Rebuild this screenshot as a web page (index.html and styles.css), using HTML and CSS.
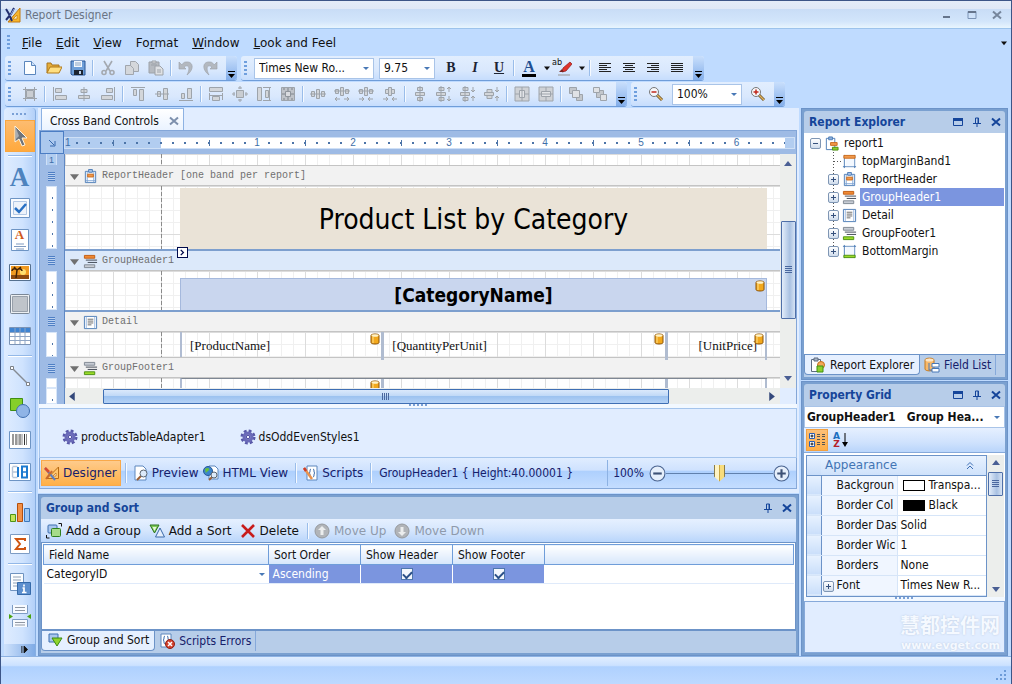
FILE: index.html
```html
<!DOCTYPE html>
<html lang="en">
<head>
    <meta charset="UTF-8">
    <meta name="viewport" content="width=device-width, initial-scale=1.0">
    <title>Report Designer</title>
    <link rel="stylesheet" href="styles.css">
</head>
<body>

<!-- icon sprite -->
<svg class="sprite" xmlns="http://www.w3.org/2000/svg">
    <symbol id="i-logo" viewBox="0 0 16 16"><path d="M15 1v14H3z" fill="#f7b52c" stroke="#c27a10"/><path d="M12 8v4H8z" fill="#fff3c8" stroke="#c27a10" stroke-width=".7"/><path d="M1 2l3 5 3 7M9 1L6 7l-5 6" fill="none" stroke="#222e6e" stroke-width="2"/><path d="M9 2L5 9" stroke="#8fa6de"/></symbol>
    <symbol id="i-new" viewBox="0 0 16 16"><path d="M2.500 1.500h7l4 4v9h-11z" fill="#fcfeff" stroke="#5a86bd"/><path d="M9.500 1.500v4h4" fill="#cfe2f8" stroke="#5a86bd"/></symbol>
    <symbol id="i-open" viewBox="0 0 16 16"><path d="M1 13V3h4l1 2h7v3" fill="#e5ad3a" stroke="#a8741c"/><path d="M1 13l3-6h12l-3 6z" fill="#ffdf80" stroke="#b27b1b"/></symbol>
    <symbol id="i-save" viewBox="0 0 16 16"><path d="M1 1h14v14H2l-1-1z" fill="#6f9fd8" stroke="#2b5797"/><path d="M4 1h8v6H4z" fill="#f4f8fd"/><path d="M5 3h6M5 5h6" stroke="#8aa4c4"/><path d="M4 10h9v5H4z" fill="#1c2430"/><path d="M9 11h2v3H9z" fill="#bcd0e8"/></symbol>
    <symbol id="i-cut" viewBox="0 0 16 16"><g fill="none" stroke="#a4a9b0" stroke-width="1.6"><path d="M4 1l6 10M12 1L6 11"/><circle cx="4" cy="12.500" r="2"/><circle cx="12" cy="12.500" r="2"/></g></symbol>
    <symbol id="i-copy" viewBox="0 0 16 16"><g fill="#d4d7db" stroke="#a1a6ad"><path d="M6.500 1.500h5l3 3v7h-8z"/><path d="M1.500 5.500h5l3 3v6h-8z"/></g></symbol>
    <symbol id="i-paste" viewBox="0 0 16 16"><g stroke="#9da2a9"><path d="M1 2h10v11H1z" fill="#b6bac0"/><path d="M4 1h4v2H4z" fill="#ddd"/><path d="M7 6h5l3 3v6H7z" fill="#dfe1e4"/><path d="M9 10h4M9 12h4M3 5h6"/></g></symbol>
    <symbol id="i-undo" viewBox="0 0 16 16"><path d="M1 2v7h7L6 7c4-3 7 0 3 8 8-6 6-14-1-13-2 0-3 1-4 3z" fill="#b3b8bf" stroke="#9a9fa6" stroke-width=".6"/></symbol>
    <symbol id="i-redo" viewBox="0 0 16 16"><path d="M15 2v7H8l2-2C6 4 3 7 7 15-1 9 1 1 8 2c2 0 3 1 4 3z" fill="#b3b8bf" stroke="#9a9fa6" stroke-width=".6"/></symbol>
    <symbol id="i-marker" viewBox="0 0 16 16"><path d="M6 12l1-4 7-6 2 2-6 7z" fill="#e0332c" stroke="#8c1d1a" stroke-width=".7"/><path d="M3 12l3-3 2 3z" fill="#7a2420"/><path d="M2 14h12v2H2z" fill="#b4bcc7"/></symbol>
    <symbol id="i-al" viewBox="0 0 16 16"><path d="M2 3.500h12M2 5.500h8M2 7.500h12M2 9.500h8M2 11.500h12" stroke="#222"/></symbol>
    <symbol id="i-ac" viewBox="0 0 16 16"><path d="M2 3.500h12M4 5.500h8M2 7.500h12M4 9.500h8M2 11.500h12" stroke="#222"/></symbol>
    <symbol id="i-ar" viewBox="0 0 16 16"><path d="M2 3.500h12M6 5.500h8M2 7.500h12M6 9.500h8M2 11.500h12" stroke="#222"/></symbol>
    <symbol id="i-aj" viewBox="0 0 16 16"><path d="M2 3.500h12M2 5.500h12M2 7.500h12M2 9.500h12M2 11.500h12" stroke="#222"/></symbol>

    <!-- layout toolbar, all disabled -->
    <symbol id="g-grid" viewBox="0 0 16 16"><g fill="#c9cdd2" stroke="#9ea4ab"><path d="M4.500 4.500h7v7h-7z"/><path d="M1 3.500h14M1 12.500h14M3.500 1v14M12.500 1v14" fill="none"/></g></symbol>
    <symbol id="g-left" viewBox="0 0 16 16"><g fill="#d3d6da" stroke="#9ea4ab"><path d="M1.500 1v14M3.500 2.500h6v4h-6zM3.500 9.500h11v4h-11z"/></g></symbol>
    <symbol id="g-center" viewBox="0 0 16 16"><g fill="#d3d6da" stroke="#9ea4ab"><path d="M8 1v14M5 3.500h6v3H5zM2.500 9.500h11v3h-11z"/></g></symbol>
    <symbol id="g-right" viewBox="0 0 16 16"><g fill="#d3d6da" stroke="#9ea4ab"><path d="M14.500 1v14M6.500 2.500h6v4h-6zM1.500 9.500h11v4h-11z"/></g></symbol>
    <symbol id="g-top" viewBox="0 0 16 16"><g fill="#d3d6da" stroke="#9ea4ab"><path d="M1 1.500h14M3.500 3.500h3v6h-3zM9.500 3.500h4v11h-4z"/></g></symbol>
    <symbol id="g-mid" viewBox="0 0 16 16"><g fill="#d3d6da" stroke="#9ea4ab"><path d="M1 8h14M3.500 5.500h3v5h-3zM9.500 2.500h4v11h-4z"/></g></symbol>
    <symbol id="g-bottom" viewBox="0 0 16 16"><g fill="#d3d6da" stroke="#9ea4ab"><path d="M1 14.500h14M3.500 7.500h3v5h-3zM9.500 2.500h4v10h-4z"/></g></symbol>
    <symbol id="g-samew" viewBox="0 0 16 16"><g fill="#d3d6da" stroke="#9ea4ab"><path d="M1.500 1.500h13v4h-13zM1.500 7v7M14.500 7v7M4.500 10.500h7v4h-7zM2 9.500h12"/></g></symbol>
    <symbol id="g-samegrid" viewBox="0 0 16 16"><g fill="#c9cdd2" stroke="#9ea4ab"><path d="M4.500 4.500h7v7h-7z"/><path d="M8 0v3M8 13v3M0 8h3M13 8h3M6 2h4M6 14h4M2 6v4M14 6v4"/></g></symbol>
    <symbol id="g-sameh" viewBox="0 0 16 16"><g fill="#d3d6da" stroke="#9ea4ab"><path d="M1.500 1.500h4v13h-4zM7 1.500h8M7 14.500h8M9.500 4.500h3v7h-3zM13.500 2v12"/></g></symbol>
    <symbol id="g-sameboth" viewBox="0 0 16 16"><path d="M1.500 1.500h13v13h-13z" fill="#bfc3c9" stroke="#9ea4ab"/><path d="M5.500 5.500h5v5h-5z" fill="#d9dbdf" stroke="#8f959c"/><path d="M8 2v3M8 11v3M2 8h3M11 8h3M3 3h2M11 3h2M3 13h2M11 13h2" stroke="#7f858c"/></symbol>
    <symbol id="g-hs1" viewBox="0 0 16 16"><g fill="#d3d6da" stroke="#9ea4ab"><path d="M0 8h16M1.500 5.500h3v5h-3zM6.500 3.500h3v9h-3zM11.500 5.500h3v5h-3z"/></g></symbol>
    <symbol id="g-hs2" viewBox="0 0 16 16"><g fill="#d3d6da" stroke="#9ea4ab"><path d="M0 5h16M1.500 3.500h3v4h-3zM6.500 1.500h3v8h-3zM11.500 3.500h3v4h-3zM1 13h5M3 11l-2 2 2 2M15 13h-5M13 11l2 2-2 2"/></g></symbol>
    <symbol id="g-hs3" viewBox="0 0 16 16"><g fill="#d3d6da" stroke="#9ea4ab"><path d="M0 5h16M1.500 3.500h3v4h-3zM6.500 1.500h3v8h-3zM11.500 3.500h3v4h-3zM1 13h5M4 11l2 2-2 2M15 13h-5M12 11l-2 2 2 2"/></g></symbol>
    <symbol id="g-hs4" viewBox="0 0 16 16"><g fill="#d3d6da" stroke="#9ea4ab"><path d="M3.500 3.500h3v4h-3zM6.500 1.500h3v8h-3zM9.500 3.500h3v4h-3zM1 13h5M4 11l2 2-2 2M15 13h-5M12 11l-2 2 2 2"/></g></symbol>
    <symbol id="g-vs1" viewBox="0 0 16 16"><g fill="#d3d6da" stroke="#9ea4ab"><path d="M8 0v16M5.500 1.500h5v3h-5zM3.500 6.500h9v3h-9zM5.500 11.500h5v3h-5z"/></g></symbol>
    <symbol id="g-vs2" viewBox="0 0 16 16"><g fill="#d3d6da" stroke="#9ea4ab"><path d="M5 0v16M3 1.500h5v3H3zM.500 6.500h9v3h-9zM3 11.500h5v3H3zM13 1v5M11 3l2-2 2 2M13 15v-5M11 13l2 2 2-2"/></g></symbol>
    <symbol id="g-vs3" viewBox="0 0 16 16"><g fill="#d3d6da" stroke="#9ea4ab"><path d="M5 0v16M3 1.500h5v3H3zM.500 6.500h9v3h-9zM3 11.500h5v3H3zM13 1v5M11 4l2 2 2-2M13 15v-5M11 12l2-2 2 2"/></g></symbol>
    <symbol id="g-vs4" viewBox="0 0 16 16"><g fill="#d3d6da" stroke="#9ea4ab"><path d="M3 3.500h5v3H3zM.500 6.500h9v3h-9zM3 9.500h5v3H3zM13 1v5M11 4l2 2 2-2M13 15v-5M11 12l2-2 2 2"/></g></symbol>
    <symbol id="g-ch" viewBox="0 0 16 16"><path d="M1 1h14v14H1z" fill="#cfd2d6" stroke="#9ea4ab"/><path d="M8 1v14M1 8h4M11 8h4M5.500 4.500h5v7h-5z" fill="#e3e5e8" stroke="#9ea4ab"/></symbol>
    <symbol id="g-cv" viewBox="0 0 16 16"><path d="M1 1h14v14H1z" fill="#cfd2d6" stroke="#9ea4ab"/><path d="M1 8h14M8 1v4M8 11v4M3.500 5.500h9v5h-9z" fill="#e3e5e8" stroke="#9ea4ab"/></symbol>
    <symbol id="g-front" viewBox="0 0 16 16"><g stroke="#9ea4ab"><path d="M1.500 1.500h7v6h-7zM8.500 8.500h6v6h-6z" fill="#c3c7cc"/><path d="M4.500 4.500h7v7h-7z" fill="#e0e2e5"/></g></symbol>
    <symbol id="g-back" viewBox="0 0 16 16"><g stroke="#9ea4ab"><path d="M4.500 4.500h7v7h-7z" fill="#c3c7cc"/><path d="M1.500 1.500h6v5h-6zM8.500 8.500h6v6h-6z" fill="#e0e2e5"/></g></symbol>
    <symbol id="i-zout" viewBox="0 0 16 16"><path d="M9 9l5 5" stroke="#6c5226" stroke-width="3"/><path d="M9 9l5 5" stroke="#e0b25c" stroke-width="1.400"/><circle cx="6" cy="6" r="4.500" fill="#f6f8fb" stroke="#777"/><path d="M3.500 6h5" stroke="#c0281c" stroke-width="1.500"/></symbol>
    <symbol id="i-zin" viewBox="0 0 16 16"><path d="M9 9l5 5" stroke="#6c5226" stroke-width="3"/><path d="M9 9l5 5" stroke="#e0b25c" stroke-width="1.400"/><circle cx="6" cy="6" r="4.500" fill="#f6f8fb" stroke="#777"/><path d="M3.500 6h5M6 3.500v5" stroke="#c0281c" stroke-width="1.500"/></symbol>

    <!-- toolbox -->
    <symbol id="t-arrow" viewBox="0 0 24 24"><path d="M7 2v16l4-3 3 7 3-1-3-7h5z" fill="#6f747b" stroke="#fff3dd"/><path d="M8 4v11l3-3" fill="#a9adb3"/></symbol>
    <symbol id="t-check" viewBox="0 0 24 24"><path d="M2.500 2.500h19v19h-19z" fill="#fafcff" stroke="#6d94c4"/><path d="M5.500 5.500h13v13h-13z" fill="#eef3fa" stroke="#b3c8e4"/><path d="M7 12l4 4 7-8" fill="none" stroke="#2870c4" stroke-width="2.500"/></symbol>
    <symbol id="t-rich" viewBox="0 0 24 24"><path d="M3.500 1.500h17v21h-17z" fill="#fff" stroke="#6d94c4"/><path d="M8 16h8M6 18.500h12M8 21h8" stroke="#7f9ac0"/></symbol>
    <symbol id="t-pic" viewBox="0 0 24 24"><path d="M1.500 4.500h21v16h-21z" fill="#fff" stroke="#55708f"/><path d="M3 6h18v13H3z" fill="#f09a22"/><path d="M3 15h18v4H3z" fill="#8e4a10"/><circle cx="15" cy="12" r="3" fill="#ffe070"/><path d="M8 18l1-8M9 10c-3-3-5 0-5 1M9 10c3-3 5 0 5 1M9 10L6 7M9 10l4-3" stroke="#432306" fill="none" stroke-width="1.500"/></symbol>
    <symbol id="t-panel" viewBox="0 0 24 24"><rect x="2.500" y="2.500" width="19" height="19" rx="1" fill="#eceff2" stroke="#7a8796"/><path d="M4.500 4.500h15v15h-15z" fill="#bfc4ca" stroke="#98a0aa"/></symbol>
    <symbol id="t-table" viewBox="0 0 24 24"><path d="M1.500 3.500h21v17h-21z" fill="#fff" stroke="#7b93b5"/><path d="M2 4h20v4H2z" fill="#3f84d2"/><path d="M7 4v16M12 4v16M17 4v16M2 8.500h20M2 12.500h20M2 16.500h20" stroke="#8fa5c4"/></symbol>
    <symbol id="t-line" viewBox="0 0 24 24"><path d="M4 4l16 16" stroke="#858b93" stroke-width="1.500"/><path d="M2.500 2.500h3v3h-3zM18.500 18.500h3v3h-3z" fill="#fff" stroke="#7b8087"/></symbol>
    <symbol id="t-shape" viewBox="0 0 24 24"><path d="M2.500 2.500h12v12h-12z" fill="#86cf2a" stroke="#3f8f12"/><circle cx="15" cy="15" r="6.500" fill="#8fb4e6" stroke="#3f6fb0"/></symbol>
    <symbol id="t-bar" viewBox="0 0 24 24"><path d="M1.500 3.500h21v17h-21z" fill="#fff" stroke="#6d94c4"/><path d="M5 6v11M8 6v11M12 6v11M16.500 6v11" stroke="#333"/><path d="M10 6v11M14 6v11M18.500 6v11" stroke="#888"/></symbol>
    <symbol id="t-seg" viewBox="0 0 24 24"><path d="M1.500 3.500h21v17h-21z" fill="#fff" stroke="#6d94c4"/><path d="M4.500 6.500h5M4.500 12h5M4.500 17.500h5M4.500 7v10" fill="none" stroke="#b8c6d8" stroke-width="1.400"/><path d="M10 7v10" stroke="#1c7ad0" stroke-width="2"/><path d="M14 6.500h5v11h-5z" fill="none" stroke="#1c7ad0" stroke-width="2"/><path d="M14 12h5" stroke="#1c7ad0" stroke-width="1.500"/></symbol>
    <symbol id="t-chart" viewBox="0 0 24 24"><path d="M2.500 14.500h5v7h-5z" fill="#c4e45c" stroke="#4f9418"/><path d="M9.500 3.500h5v18h-5z" fill="#f39046" stroke="#b4500c"/><path d="M16.500 8.500h5v13h-5z" fill="#9ec6f2" stroke="#3b78bd"/></symbol>
    <symbol id="t-sum" viewBox="0 0 24 24"><path d="M2.500 2.500h19v19h-19z" fill="#fff" stroke="#7d9cc4"/><path d="M17 9V7H8l4 5-4 5h9v-2" fill="none" stroke="#d05510" stroke-width="2"/></symbol>
    <symbol id="t-info" viewBox="0 0 24 24"><path d="M2.500 1.500h13v17h-13z" fill="#fbfdff" stroke="#6f93c0"/><path d="M5 5h8M5 8h8M5 11h5M5 14h4" stroke="#8fa0b5"/><path d="M9.500 10.500h13v12h-13z" fill="#5d8fce" stroke="#356aaa"/><path d="M16 12.500v2M14.500 16H16v4.500M14 20.500h4.500" stroke="#fff" stroke-width="1.700" fill="none"/></symbol>
    <symbol id="t-break" viewBox="0 0 24 24"><path d="M4.500 1v8.500h15V1M4.500 23v-7.500h15V23" fill="#f7faff" stroke="#7d9cc4"/><path d="M7 3.500h10M7 6.500h10M7 18.500h10M7 21h10" stroke="#8f97a3"/><path d="M1 10l4 2.500L1 15zM23 10l-4 2.500 4 2.500z" fill="#4aa30f"/></symbol>

    <!-- bands -->
    <symbol id="b-report" viewBox="0 0 16 16"><path d="M2.500 2.500h9v12h-9z" fill="#fff" stroke="#4c7cb6"/><path d="M5 1h4v3H5z" fill="#8fb0da" stroke="#4c7cb6"/><path d="M7 7h7v3H7z" fill="#f29a4c" stroke="#c96a1c"/><path d="M9 12h6v3H9z" fill="#8ccc2c" stroke="#4c8f12"/></symbol>
    <symbol id="b-top" viewBox="0 0 16 16"><path d="M2.500 1v14M13.500 1v14M1 13.500h14" stroke="#4c7cb6"/><path d="M4 5h9v8H4z" fill="#f3f8ff"/><path d="M2 1.500h12v3H2z" fill="#f29a4c" stroke="#c96a1c"/></symbol>
    <symbol id="b-rh" viewBox="0 0 16 16"><path d="M2.500 2.500h11v12h-11z" fill="#fff" stroke="#4c7cb6"/><path d="M4.500 3v11M11.500 3v11M3 12.500h10" stroke="#7fa4d4"/><path d="M6 .500h4v3H6z" fill="#a9c3e6" stroke="#4c7cb6"/><path d="M5 5.500h6v3H5z" fill="#f29a4c" stroke="#c96a1c"/></symbol>
    <symbol id="b-gh" viewBox="0 0 16 16"><path d="M1.500 1.500h11v3h-11z" fill="#f08a34" stroke="#c05c12"/><path d="M3 6.500h12M5 9h10" stroke="#3c4350"/><path d="M1.500 11.500h11v3h-11z" fill="#c7ccd4" stroke="#7f8792"/></symbol>
    <symbol id="b-detail" viewBox="0 0 16 16"><path d="M1.500 1.500h13v13h-13z" fill="#fff" stroke="#4c7cb6"/><path d="M3.500 2v12M12.500 2v12" stroke="#9bb9e0"/><path d="M5 4.500h6M5 6.500h6M5 8.500h6M5 10.500h4" stroke="#666"/></symbol>
    <symbol id="b-gf" viewBox="0 0 16 16"><path d="M1.500 1.500h11v3h-11z" fill="#c7ccd4" stroke="#7f8792"/><path d="M3 6.500h12M5 9h10" stroke="#3c4350"/><path d="M1.500 11.500h11v3h-11z" fill="#9bdb28" stroke="#4c8f12"/></symbol>
    <symbol id="b-bottom" viewBox="0 0 16 16"><path d="M2.500 1v14M13.500 1v14M1 2.500h14" stroke="#4c7cb6"/><path d="M4 3h9v8H4z" fill="#f3f8ff"/><path d="M2 12h12v2.500H2z" fill="#9bdb28" stroke="#4c8f12"/></symbol>
    <symbol id="i-db" viewBox="0 0 10 12"><path d="M1 2.500C1 .500 9 .500 9 2.500v7c0 2-8 2-8 0z" fill="#f2a81c" stroke="#8a5208"/><path d="M3 4v6" stroke="#ffe08a"/><ellipse cx="5" cy="2.500" rx="3.500" ry="1.300" fill="#fff3c8"/></symbol>

    <symbol id="i-gear" viewBox="0 0 16 16"><circle cx="8" cy="8" r="6" fill="none" stroke="#5858a8" stroke-width="3" stroke-dasharray="2.700 2"/><circle cx="8" cy="8" r="4" fill="#9a9bd6" stroke="#6a6ab8" stroke-width="3"/><circle cx="8" cy="8" r="1.800" fill="#eef" stroke="#45459a"/></symbol>
    <symbol id="i-design" viewBox="0 0 16 16"><path d="M14.500 2v11.500H3z" fill="#ffc56c" stroke="#b86a14"/><path d="M12 8v3H9z" fill="#fff" stroke="#b86a14" stroke-width=".7"/><path d="M1 3l10 12" stroke="#5d7fc0" stroke-width="2"/><path d="M1 3l4 4" stroke="#d84a30" stroke-width="2.500"/><path d="M2 14l6-8" stroke="#c86a32" stroke-width="2"/></symbol>
    <symbol id="i-preview" viewBox="0 0 16 16"><path d="M2 1h8l3 3v11H2z" fill="#fff" stroke="#5d87bd"/><path d="M8 11l-4 4" stroke="#9b5e34" stroke-width="2"/><circle cx="10.500" cy="8.500" r="3.500" fill="#dceafa" stroke="#5b6570"/></symbol>
    <symbol id="i-html" viewBox="0 0 16 16"><path d="M6 1h6l3 3v10H6z" fill="#fff" stroke="#5d87bd"/><circle cx="5" cy="6" r="4.500" fill="#3b85cc" stroke="#28589a"/><path d="M2 4c2-2 5-1 4 1s-3 1-3 4" fill="#68bf3c"/><path d="M9 12l-3 3" stroke="#9b5e34" stroke-width="2"/><circle cx="11" cy="10" r="3" fill="#dceafa" stroke="#5b6570"/></symbol>
    <symbol id="i-script" viewBox="0 0 16 16"><path d="M4 1h10v14H4z" fill="#fff" stroke="#5d87bd"/><path d="M8 4c-2 0 0 4-2 4 2 0 0 4 2 4M10 4c2 0 0 4 2 4-2 0 0 4-2 4" fill="none" stroke="#3b6bab"/><path d="M1 3l8 11" stroke="#e8924c" stroke-width="2.500"/><path d="M1 3l2 3" stroke="#cc3c2c" stroke-width="2.500"/></symbol>
    <symbol id="i-addgroup" viewBox="0 0 16 16"><rect x="2" y="2" width="9" height="8" rx="1" fill="#a9c6ee" stroke="#3d6eaf"/><rect x="5.500" y="5.500" width="9" height="8" rx="1" fill="#a6dc8a" stroke="#2f7f1e"/><path d="M12.500 .500h3v3M.500 12v3h3" fill="none" stroke="#111"/></symbol>
    <symbol id="i-addsort" viewBox="0 0 16 16"><path d="M1 2h9l-4.500 8z" fill="#7fcb57" stroke="#2c7420"/><path d="M3.500 4h4L5.500 8z" fill="#e4f6da"/><path d="M11 5l4.500 9h-9z" fill="#e4eefb" stroke="#3a68a8"/></symbol>
    <symbol id="i-del" viewBox="0 0 16 16"><path d="M2 2l12 12M14 2L2 14" stroke="#c81c1c" stroke-width="2.600"/></symbol>
    <symbol id="i-up" viewBox="0 0 16 16"><circle cx="8" cy="8" r="7" fill="#b1b4b8" stroke="#96999d"/><path d="M8 3l4 4H9.500v5h-3V7H4z" fill="#eceded"/></symbol>
    <symbol id="i-down" viewBox="0 0 16 16"><circle cx="8" cy="8" r="7" fill="#b1b4b8" stroke="#96999d"/><path d="M8 13l4-4H9.500V4h-3v5H4z" fill="#eceded"/></symbol>
    <symbol id="i-gstab" viewBox="0 0 16 16"><path d="M2 2h9v8H2z" fill="#a9c6ee" stroke="#3d6eaf"/><path d="M5 6h10l-5 8z" fill="#8fd42e" stroke="#3b8a12"/></symbol>
    <symbol id="i-err" viewBox="0 0 16 16"><path d="M2 1h10v13H2z" fill="#fff" stroke="#5d87bd"/><path d="M6 3c-2 0 0 4-2 4 2 0 0 4 2 4M8 3c2 0 0 4 2 4" fill="none" stroke="#3b6bab"/><circle cx="11" cy="11" r="4.500" fill="#d2402c" stroke="#8e2014"/><path d="M9 9l4 4M13 9l-4 4" stroke="#fff" stroke-width="1.500"/></symbol>
    <symbol id="i-explorer" viewBox="0 0 16 16"><path d="M1.500 2.500h9v12h-9z" fill="#fff" stroke="#5c6b80"/><path d="M4 1h4v3H4z" fill="#aab6c6" stroke="#5c6b80"/><circle cx="11" cy="8" r="3.500" fill="#f5a758" stroke="#c4701c"/><path d="M7 9h6v6H7z" fill="#8ed12c" stroke="#3f8f12"/></symbol>
    <symbol id="i-fields" viewBox="0 0 16 16"><path d="M1 3c0-2.500 9-2.500 9 0v9c0 2.500-9 2.500-9 0z" fill="#f7b96c" stroke="#c47a20"/><ellipse cx="5.500" cy="3" rx="4" ry="1.500" fill="#fde6c6"/><path d="M8 6.500h7v3.500H8zM8 11.500h7V15H8z" fill="#fff" stroke="#4878b8"/><path d="M5 6v7h3" fill="none" stroke="#4878b8"/></symbol>
    <symbol id="i-cat" viewBox="0 0 18 18"><path d="M1.500 2.500h5v5h-5zM1.500 10.500h5v5h-5z" fill="#fff" stroke="#2b5fb4"/><path d="M2.500 5h3M4 3.500v3M2.500 13h3M4 11.500v3" stroke="#111"/><path d="M9 3.500h3M14 3.500h3M9 5.500h3M14 5.500h3M9 8.500h3M14 8.500h3M9 11.500h3M14 11.500h3M9 13.500h3M14 13.500h3" stroke="#555"/></symbol>
    <symbol id="i-restore" viewBox="0 0 10 10"><path d="M.500 1.500h9v7h-9z" fill="none" stroke="#15459a"/><path d="M0 1h10v3H0z" fill="#15459a"/></symbol>
    <symbol id="i-pin" viewBox="0 0 10 10"><path d="M3.500 1h3v5M3.500 1v5M6 1v5M1 6.500h8M5 7v3" fill="none" stroke="#15459a"/></symbol>
    <symbol id="i-x" viewBox="0 0 10 10"><path d="M1 1.500l8 7M9 1.500l-8 7" stroke="currentColor" stroke-width="2"/></symbol>
    <symbol id="i-tri" viewBox="0 0 8 8"><path d="M0 2h8L4 7z" fill="currentColor"/></symbol>
</svg>

<div class="window">
    <header class="titlebar">
        <svg class="ico"><use href="#i-logo"/></svg>
        <h1>Report Designer</h1>
        <button class="winbtn" aria-label="Minimize"><svg viewBox="0 0 10 10"><path d="M1 7h7" stroke="#66758c" stroke-width="2"/></svg></button>
        <button class="winbtn" aria-label="Maximize"><svg viewBox="0 0 10 10"><path d="M1 1.500h8v7H1z" fill="none" stroke="#7b93b5"/><path d="M1 2h8" stroke="#66758c" stroke-width="2"/></svg></button>
        <button class="winbtn" aria-label="Close"><svg viewBox="0 0 10 10"><use href="#i-x"/></svg></button>
    </header>

    <nav class="menubar">
        <span class="grip"></span>
        <a href="#"><u>F</u>ile</a>
        <a href="#"><u>E</u>dit</a>
        <a href="#"><u>V</u>iew</a>
        <a href="#">Fo<u>r</u>mat</a>
        <a href="#"><u>W</u>indow</a>
        <a href="#"><u>L</u>ook and Feel</a>
        <button class="menu-more" aria-label="Menu options"><svg class="tri"><use href="#i-tri"/></svg></button>
    </nav>

    <div class="toolrow">
        <div class="toolbar">
            <span class="grip"></span>
            <button class="tb" aria-label="New"><svg class="ico"><use href="#i-new"/></svg></button>
            <button class="tb" aria-label="Open"><svg class="ico"><use href="#i-open"/></svg></button>
            <button class="tb" aria-label="Save"><svg class="ico"><use href="#i-save"/></svg></button>
            <span class="sep"></span>
            <button class="tb" aria-label="Cut"><svg class="ico"><use href="#i-cut"/></svg></button>
            <button class="tb" aria-label="Copy"><svg class="ico"><use href="#i-copy"/></svg></button>
            <button class="tb" aria-label="Paste"><svg class="ico"><use href="#i-paste"/></svg></button>
            <span class="sep"></span>
            <button class="tb" aria-label="Undo"><svg class="ico"><use href="#i-undo"/></svg></button>
            <button class="tb" aria-label="Redo"><svg class="ico"><use href="#i-redo"/></svg></button>
            <button class="more" aria-label="More standard buttons"></button>
        </div>
        <div class="toolbar">
            <span class="grip"></span>
            <select class="font-name" aria-label="Font name"><option>Times New Ro...</option></select>
            <select class="font-size" aria-label="Font size"><option>9.75</option></select>
            <button class="tb fmt" aria-label="Bold">B</button>
            <button class="tb fmt" aria-label="Italic"><i>I</i></button>
            <button class="tb fmt" aria-label="Underline"><u>U</u></button>
            <span class="sep"></span>
            <button class="tb fmt color" aria-label="Font color"><span>A</span></button>
            <button class="drop" aria-label="Font color list"><svg class="tri"><use href="#i-tri"/></svg></button>
            <button class="tb mark" aria-label="Highlight color"><span>ab</span><svg class="ico"><use href="#i-marker"/></svg></button>
            <button class="drop" aria-label="Highlight color list"><svg class="tri"><use href="#i-tri"/></svg></button>
            <span class="sep"></span>
            <button class="tb" aria-label="Align left"><svg class="ico"><use href="#i-al"/></svg></button>
            <button class="tb" aria-label="Center"><svg class="ico"><use href="#i-ac"/></svg></button>
            <button class="tb" aria-label="Align right"><svg class="ico"><use href="#i-ar"/></svg></button>
            <button class="tb" aria-label="Justify"><svg class="ico"><use href="#i-aj"/></svg></button>
            <button class="more" aria-label="More format buttons"></button>
        </div>
    </div>

    <div class="toolrow">
        <div class="toolbar">
            <span class="grip"></span>
            <button class="tb" aria-label="Align to grid"><svg class="ico"><use href="#g-grid"/></svg></button>
            <span class="sep"></span>
            <button class="tb" aria-label="Lefts"><svg class="ico"><use href="#g-left"/></svg></button>
            <button class="tb" aria-label="Centers"><svg class="ico"><use href="#g-center"/></svg></button>
            <button class="tb" aria-label="Rights"><svg class="ico"><use href="#g-right"/></svg></button>
            <span class="sep"></span>
            <button class="tb" aria-label="Tops"><svg class="ico"><use href="#g-top"/></svg></button>
            <button class="tb" aria-label="Middles"><svg class="ico"><use href="#g-mid"/></svg></button>
            <button class="tb" aria-label="Bottoms"><svg class="ico"><use href="#g-bottom"/></svg></button>
            <span class="sep"></span>
            <button class="tb" aria-label="Same width"><svg class="ico"><use href="#g-samew"/></svg></button>
            <button class="tb" aria-label="Size to grid"><svg class="ico"><use href="#g-samegrid"/></svg></button>
            <button class="tb" aria-label="Same height"><svg class="ico"><use href="#g-sameh"/></svg></button>
            <button class="tb" aria-label="Same size"><svg class="ico"><use href="#g-sameboth"/></svg></button>
            <span class="sep"></span>
            <button class="tb" aria-label="Equal horizontal spacing"><svg class="ico"><use href="#g-hs1"/></svg></button>
            <button class="tb" aria-label="Increase horizontal spacing"><svg class="ico"><use href="#g-hs2"/></svg></button>
            <button class="tb" aria-label="Decrease horizontal spacing"><svg class="ico"><use href="#g-hs3"/></svg></button>
            <button class="tb" aria-label="Remove horizontal spacing"><svg class="ico"><use href="#g-hs4"/></svg></button>
            <span class="sep"></span>
            <button class="tb" aria-label="Equal vertical spacing"><svg class="ico"><use href="#g-vs1"/></svg></button>
            <button class="tb" aria-label="Increase vertical spacing"><svg class="ico"><use href="#g-vs2"/></svg></button>
            <button class="tb" aria-label="Decrease vertical spacing"><svg class="ico"><use href="#g-vs3"/></svg></button>
            <button class="tb" aria-label="Remove vertical spacing"><svg class="ico"><use href="#g-vs4"/></svg></button>
            <span class="sep"></span>
            <button class="tb" aria-label="Center horizontally"><svg class="ico"><use href="#g-ch"/></svg></button>
            <button class="tb" aria-label="Center vertically"><svg class="ico"><use href="#g-cv"/></svg></button>
            <span class="sep"></span>
            <button class="tb" aria-label="Bring to front"><svg class="ico"><use href="#g-front"/></svg></button>
            <button class="tb" aria-label="Send to back"><svg class="ico"><use href="#g-back"/></svg></button>
            <button class="more" aria-label="More layout buttons"></button>
        </div>
        <div class="toolbar">
            <span class="grip"></span>
            <button class="tb" aria-label="Zoom out"><svg class="ico"><use href="#i-zout"/></svg></button>
            <select class="zoom" aria-label="Zoom"><option>100%</option></select>
            <button class="tb" aria-label="Zoom in"><svg class="ico"><use href="#i-zin"/></svg></button>
            <button class="more" aria-label="More zoom buttons"></button>
        </div>
    </div>

    <main class="workspace">
        <aside class="toolbox">
            <span class="dots"></span>
            <button class="active" aria-label="Pointer"><svg><use href="#t-arrow"/></svg></button>
            <hr>
            <button class="letter" aria-label="Label">A</button>
            <button aria-label="Check Box"><svg><use href="#t-check"/></svg></button>
            <button class="rich" aria-label="Rich Text"><svg><use href="#t-rich"/></svg><span>A</span></button>
            <button aria-label="Picture Box"><svg><use href="#t-pic"/></svg></button>
            <button aria-label="Panel"><svg><use href="#t-panel"/></svg></button>
            <button aria-label="Table"><svg><use href="#t-table"/></svg></button>
            <hr>
            <button aria-label="Line"><svg><use href="#t-line"/></svg></button>
            <button aria-label="Shape"><svg><use href="#t-shape"/></svg></button>
            <button aria-label="Bar Code"><svg><use href="#t-bar"/></svg></button>
            <button aria-label="Zip Code"><svg><use href="#t-seg"/></svg></button>
            <hr>
            <button aria-label="Chart"><svg><use href="#t-chart"/></svg></button>
            <button aria-label="Pivot Grid"><svg><use href="#t-sum"/></svg></button>
            <hr>
            <button aria-label="Page Info"><svg><use href="#t-info"/></svg></button>
            <button aria-label="Page Break"><svg><use href="#t-break"/></svg></button>
            <button class="box-more" aria-label="More tools"><svg viewBox="0 0 8 8"><path d="M1 0v8M3.500 0v8l4-4z" fill="#111" stroke="#111"/></svg></button>
        </aside>

        <div class="center">
            <section class="document">
                <div class="doctabs">
                    <div class="doctab">Cross Band Controls <button aria-label="Close document"><svg viewBox="0 0 10 10"><use href="#i-x"/></svg></button></div>
                </div>

                <div class="designer">
                    <div class="hruler">
                        <div class="corner"><svg viewBox="0 0 8 8"><path d="M1 1l5 5M7 2v5H2" fill="none" stroke="#3567ad"/></svg></div>
                        <div class="scale">
                            <div class="inch first"><span>1</span></div>
                            <div class="inch zero"></div>
                            <div class="inch"><span>1</span></div>
                            <div class="inch"><span>2</span></div>
                            <div class="inch"><span>3</span></div>
                            <div class="inch"><span>4</span></div>
                            <div class="inch"><span>5</span></div>
                            <div class="inch last"><span>6</span></div>
                        </div>
                    </div>
                    <div class="surface">
                        <div class="bands">
                            <div class="band-body margin"><div class="vr"><span>1</span></div><div class="paper"></div></div>

                            <div class="band-head"><div class="vr"><i></i></div><div class="caption"><svg class="tri"><use href="#i-tri"/></svg><svg class="ico"><use href="#b-rh"/></svg>ReportHeader [one band per report]</div></div>
                            <div class="band-body header"><div class="vr"><i></i></div><div class="paper"><div class="title-label">Product List by Category</div></div></div>

                            <div class="band-head selected"><div class="vr"><i></i></div><div class="caption"><svg class="tri"><use href="#i-tri"/></svg><svg class="ico"><use href="#b-gh"/></svg>GroupHeader1<button class="smarttag" aria-label="Band tasks"><svg viewBox="0 0 8 8"><path d="M2 1l3 3-3 3" fill="none" stroke="#000a4c" stroke-width="1.500"/></svg></button></div></div>
                            <div class="band-body group"><div class="vr"><i></i></div><div class="paper"><div class="cat-label">[CategoryName]<svg class="db"><use href="#i-db"/></svg></div></div></div>

                            <div class="band-head blue-top"><div class="vr"><i></i></div><div class="caption"><svg class="tri"><use href="#i-tri"/></svg><svg class="ico"><use href="#b-detail"/></svg>Detail</div></div>
                            <div class="band-body detail"><div class="vr"><i></i></div><div class="paper">
                                <div class="cells">
                                    <div>[ProductName]<svg class="db"><use href="#i-db"/></svg></div>
                                    <div>[QuantityPerUnit]<svg class="db"><use href="#i-db"/></svg></div>
                                    <div class="right">[UnitPrice]<svg class="db"><use href="#i-db"/></svg></div>
                                </div>
                            </div></div>

                            <div class="band-head"><div class="vr"><i></i></div><div class="caption"><svg class="tri"><use href="#i-tri"/></svg><svg class="ico"><use href="#b-gf"/></svg>GroupFooter1</div></div>
                            <div class="band-body footer"><div class="vr"><i></i></div><div class="paper">
                                <div class="cells">
                                    <div><svg class="db"><use href="#i-db"/></svg></div>
                                    <div></div>
                                    <div></div>
                                </div>
                            </div></div>
                        </div>
                        <div class="vscroll">
                            <svg class="tri up"><use href="#i-tri"/></svg>
                            <div class="thumb"><i></i></div>
                            <svg class="tri"><use href="#i-tri"/></svg>
                        </div>
                    </div>
                    <div class="hscroll-row">
                        <div class="vr"><i></i></div>
                        <div class="hscroll">
                            <svg class="tri left"><use href="#i-tri"/></svg>
                            <div class="thumb"><i></i></div>
                            <svg class="tri rightward"><use href="#i-tri"/></svg>
                        </div>
                    </div>
                </div>

                <div class="splitter"><span class="dots"></span></div>
                <div class="tray">
                    <div><svg class="ico"><use href="#i-gear"/></svg>productsTableAdapter1</div>
                    <div><svg class="ico"><use href="#i-gear"/></svg>dsOddEvenStyles1</div>
                </div>

                <div class="viewbar">
                    <button class="view active"><svg class="ico"><use href="#i-design"/></svg>Designer</button>
                    <span class="sep"></span>
                    <button class="view"><svg class="ico"><use href="#i-preview"/></svg>Preview</button>
                    <button class="view"><svg class="ico"><use href="#i-html"/></svg>HTML View</button>
                    <span class="sep"></span>
                    <button class="view"><svg class="ico"><use href="#i-script"/></svg>Scripts</button>
                    <span class="sep"></span>
                    <span class="status-text">GroupHeader1 { Height:40.00001 }</span>
                    <label class="zoomlabel" for="zoom">100%</label>
                    <button class="round" aria-label="Decrease zoom"><svg viewBox="0 0 16 16"><circle cx="8" cy="8" r="7" fill="#e6effb" stroke="#4a6490"/><path d="M4 8h8" stroke="#3e5276" stroke-width="2"/></svg></button>
                    <input type="range" id="zoom" min="0" max="100" value="50">
                    <button class="round" aria-label="Increase zoom"><svg viewBox="0 0 16 16"><circle cx="8" cy="8" r="7" fill="#e6effb" stroke="#4a6490"/><path d="M4 8h8M8 4v8" stroke="#3e5276" stroke-width="2"/></svg></button>
                </div>
            </section>

            <section class="panel groupsort">
                <div class="panel-head">
                    <h2>Group and Sort</h2>
                    <button aria-label="Pin"><svg><use href="#i-pin"/></svg></button>
                    <button aria-label="Close"><svg><use href="#i-x"/></svg></button>
                </div>
                <div class="gs-bar">
                    <button><svg class="ico"><use href="#i-addgroup"/></svg>Add a Group</button>
                    <button><svg class="ico"><use href="#i-addsort"/></svg>Add a Sort</button>
                    <button><svg class="ico"><use href="#i-del"/></svg>Delete</button>
                    <span class="sep"></span>
                    <button disabled><svg class="ico"><use href="#i-up"/></svg>Move Up</button>
                    <button disabled><svg class="ico"><use href="#i-down"/></svg>Move Down</button>
                </div>
                <div class="gs-grid">
                    <table>
                        <thead>
                            <tr><th class="c-field">Field Name</th><th class="c-col">Sort Order</th><th class="c-col">Show Header</th><th class="c-col">Show Footer</th><th></th></tr>
                        </thead>
                        <tbody>
                            <tr>
                                <td><select class="field" aria-label="Field name"><option>CategoryID</option></select></td>
                                <td class="sel">Ascending</td>
                                <td class="sel chk"><input type="checkbox" aria-label="Show header" checked></td>
                                <td class="sel chk"><input type="checkbox" aria-label="Show footer" checked></td>
                                <td></td>
                            </tr>
                        </tbody>
                    </table>
                </div>
                <div class="panel-tabs">
                    <button class="on"><svg class="ico"><use href="#i-gstab"/></svg>Group and Sort</button>
                    <button><svg class="ico"><use href="#i-err"/></svg>Scripts Errors</button>
                </div>
            </section>
        </div>

        <div class="side">
            <section class="panel explorer">
                <div class="panel-head">
                    <h2>Report Explorer</h2>
                    <button aria-label="Restore"><svg><use href="#i-restore"/></svg></button>
                    <button aria-label="Pin"><svg><use href="#i-pin"/></svg></button>
                    <button aria-label="Close"><svg><use href="#i-x"/></svg></button>
                </div>
                <div class="tree">
                    <div class="node root"><button class="exp minus" aria-label="Collapse"></button><svg class="ico"><use href="#b-report"/></svg><span>report1</span></div>
                    <ul>
                        <li class="node leaf"><svg class="ico"><use href="#b-top"/></svg><span>topMarginBand1</span></li>
                        <li class="node"><button class="exp" aria-label="Expand"></button><svg class="ico"><use href="#b-rh"/></svg><span>ReportHeader</span></li>
                        <li class="node picked"><button class="exp" aria-label="Expand"></button><svg class="ico"><use href="#b-gh"/></svg><span>GroupHeader1</span></li>
                        <li class="node"><button class="exp" aria-label="Expand"></button><svg class="ico"><use href="#b-detail"/></svg><span>Detail</span></li>
                        <li class="node"><button class="exp" aria-label="Expand"></button><svg class="ico"><use href="#b-gf"/></svg><span>GroupFooter1</span></li>
                        <li class="node"><button class="exp" aria-label="Expand"></button><svg class="ico"><use href="#b-bottom"/></svg><span>BottomMargin</span></li>
                    </ul>
                </div>
                <div class="panel-tabs">
                    <button class="on"><svg class="ico"><use href="#i-explorer"/></svg>Report Explorer</button>
                    <button><svg class="ico"><use href="#i-fields"/></svg>Field List</button>
                </div>
            </section>

            <section class="panel props">
                <div class="panel-head">
                    <h2>Property Grid</h2>
                    <button aria-label="Restore"><svg><use href="#i-restore"/></svg></button>
                    <button aria-label="Pin"><svg><use href="#i-pin"/></svg></button>
                    <button aria-label="Close"><svg><use href="#i-x"/></svg></button>
                </div>
                <select class="object" aria-label="Object"><option>GroupHeader1 &nbsp; Group Hea...</option></select>
                <div class="prop-bar">
                    <button class="active" aria-label="Categorized"><svg><use href="#i-cat"/></svg></button>
                    <button class="az" aria-label="Alphabetical"><span><b>A</b><b>Z</b></span><svg viewBox="0 0 6 16"><path d="M3 1v12" stroke="#000"/><path d="M0 10h6l-3 5z"/></svg></button>
                </div>
                <div class="prop-area">
                    <div class="prop-table">
                        <table>
                            <colgroup><col class="c-edge"><col class="c-name"><col></colgroup>
                            <thead>
                                <tr><th class="edge"></th><th colspan="2"><span>Appearance <svg viewBox="0 0 8 8"><path d="M1 4l3-3 3 3M1 7.500l3-3 3 3" fill="none" stroke="#3c6eb4"/></svg></span></th></tr>
                            </thead>
                            <tbody>
                                <tr><td class="edge"></td><td class="name">Backgroun</td><td><i class="swatch"></i>Transpa...</td></tr>
                                <tr><td class="edge"></td><td class="name">Border Col</td><td><i class="swatch black"></i>Black</td></tr>
                                <tr><td class="edge"></td><td class="name">Border Das</td><td>Solid</td></tr>
                                <tr><td class="edge"></td><td class="name">Border Wic</td><td>1</td></tr>
                                <tr><td class="edge"></td><td class="name">Borders</td><td>None</td></tr>
                                <tr><td class="edge"></td><td class="name font"><button class="exp" aria-label="Expand"></button>Font</td><td>Times New R...</td></tr>
                            </tbody>
                        </table>
                    </div>
                    <div class="vscroll small">
                        <svg class="tri up"><use href="#i-tri"/></svg>
                        <div class="thumb"><i></i></div>
                        <svg class="tri"><use href="#i-tri"/></svg>
                    </div>
                </div>
                <div class="splitter"><span class="dots"></span></div>
                <div class="desc">
                    <div class="mark-cn" lang="zh">慧都控件网</div>
                    <div class="mark-url">www.evget.com</div>
                </div>
            </section>
        </div>
    </main>

    <footer class="statusbar">
        <svg viewBox="0 0 12 12"><path d="M9 1h2v2H9zM9 5h2v2H9zM9 9h2v2H9zM5 5h2v2H5zM5 9h2v2H5zM1 9h2v2H1z" fill="#6c9bd8"/></svg>
    </footer>
</div>

</body>
</html>
```

FILE: styles.css
```css
* {
    box-sizing: border-box;
}
body {
    margin: 0;
    font: 12px/16px "DejaVu Sans Condensed", "DejaVu Sans", sans-serif;
    color: #111;
}
button, select, input {
    font: inherit;
    color: inherit;
    margin: 0;
}
button {
    display: flex;
    align-items: center;
    justify-content: center;
    padding: 0;
    border: none;
    background: none;
}
svg {
    display: block;
    flex: none;
}
h1, h2 {
    margin: 0;
    font-size: 12px;
}
a {
    color: inherit;
    text-decoration: none;
}
table {
    border-collapse: collapse;
    table-layout: fixed;
    width: 100%;
}
.sprite {
    display: none;
}
.ico {
    width: 16px;
    height: 16px;
}
.tri {
    width: 6px;
    height: 6px;
}
.window {
    display: flex;
    flex-direction: column;
    min-height: 100vh;
    border: 1px solid #3c5587;
    background: #bfdbff;
}

/* title and menu */
.titlebar {
    display: flex;
    align-items: center;
    gap: 4px;
    height: 28px;
    padding: 0 4px;
    background: linear-gradient(#e4ecf8 0, #dfe8f6 30%, #c9ddf6 31%, #d2e5fb 75%, #e8f5fe 100%);
    border-bottom: 1px solid #9cc3ec;
}
.titlebar h1 {
    flex: 1;
    font-weight: normal;
    color: #6a7484;
}
.winbtn {
    width: 21px;
    height: 20px;
    color: #76869c;
}
.winbtn svg {
    width: 10px;
    height: 10px;
}
.menubar {
    display: flex;
    align-items: center;
    gap: 14px;
    height: 27px;
    padding: 0 4px 0 6px;
    font-family: "DejaVu Sans", sans-serif;
}
.grip {
    width: 3px;
    height: 15px;
    background: repeating-linear-gradient(#6f9fde 0 2px, transparent 2px 4px);
}
.menubar .grip {
    margin-right: -2px;
}
.menu-more {
    margin-left: auto;
}

/* toolbars */
.toolrow {
    display: flex;
    gap: 4px;
    height: 26px;
    padding: 0 4px 1px;
}
.toolbar {
    display: flex;
    align-items: center;
    border-radius: 3px;
    background: linear-gradient(#e2eefe, #d9e8fd 60%, #c6ddfd);
    border-bottom: 1px solid #6f9dd9;
}
.toolbar .grip {
    margin: 0 7px 0 3px;
}
.tb {
    width: 24px;
    height: 22px;
}
.sep {
    width: 2px;
    height: 16px;
    margin: 0 2px;
    border-left: 1px solid #9abdea;
    border-right: 1px solid #f6faff;
}
.more {
    align-self: stretch;
    align-items: flex-end;
    width: 11px;
    margin-left: 4px;
    padding-bottom: 2px;
    border-radius: 0 3px 3px 0;
    background: linear-gradient(#c9dffc, #83aeea);
}
.more::before {
    content: "";
    width: 7px;
    height: 7px;
    background: #000;
    clip-path: polygon(0 0, 100% 0, 100% 15%, 0 15%, 0 42%, 100% 42%, 50% 100%, 0 42%);
}
select {
    appearance: none;
    padding: 0 16px 0 4px;
    border: 1px solid #a9c4e8;
    border-radius: 0;
    background: #fff url("data:image/svg+xml,%3Csvg xmlns='http://www.w3.org/2000/svg' width='6' height='3'%3E%3Cpath d='M0 0h6L3 3z' fill='%234878b6'/%3E%3C/svg%3E") no-repeat right 4px center;
}
.toolbar select {
    height: 21px;
}
.font-name {
    width: 120px;
}
.font-size {
    width: 56px;
    margin: 0 4px 0 5px;
}
.zoom {
    width: 70px;
    margin: 0 4px;
}
.fmt {
    font: bold 14px/18px "Liberation Serif", serif;
    color: #1d2433;
}
.color span {
    width: 14px;
    height: 17px;
    font-size: 16px;
    line-height: 14px;
    border-bottom: 3px solid #000;
    color: #214f92;
}
.drop {
    width: 11px;
    height: 20px;
}
.mark {
    position: relative;
}
.mark span {
    position: absolute;
    left: 0;
    top: 0;
    font-size: 9px;
    line-height: 10px;
}

/* workspace */
.workspace {
    display: flex;
    flex: 1;
    padding: 0 3px;
}
.toolbox {
    display: flex;
    flex-direction: column;
    align-items: center;
    width: 32px;
    margin-right: 2px;
    border-right: 1px solid #87aee0;
    border-radius: 4px 4px 0 0;
    background: linear-gradient(90deg, #dfecff, #cfe3fe 60%, #b3d0f8);
}
.dots {
    width: 19px;
    height: 2px;
    background: repeating-linear-gradient(90deg, #7aa0d6 0 2px, transparent 2px 4px);
}
.toolbox .dots {
    margin: 5px 0;
    width: 15px;
}
.toolbox button {
    width: 30px;
    height: 32px;
}
.toolbox button svg {
    width: 24px;
    height: 24px;
}
.toolbox .active {
    background: linear-gradient(#fdbc70, #ffa93d);
    border: 1px solid #f9a63f;
}
.toolbox hr {
    width: 24px;
    height: 2px;
    margin: 3px 0;
    border: none;
    border-top: 1px solid #93b8e8;
    background: #fff;
}
.toolbox .letter {
    padding-top: 2px;
    font: bold 27px/30px "Liberation Serif", serif;
    color: #4d83be;
}
.rich {
    position: relative;
}
.rich span {
    position: absolute;
    top: 4px;
    font: bold 13px/14px "Liberation Serif", serif;
    color: #d05a1c;
}
.toolbox .box-more {
    align-self: stretch;
    justify-content: flex-end;
    width: auto;
    height: 12px;
    margin-top: auto;
    padding-right: 7px;
    background: linear-gradient(90deg, #cfe2fc, #7fabe6);
}
.toolbox .box-more svg {
    width: 7px;
    height: 7px;
}
.center {
    display: flex;
    flex-direction: column;
    flex: 1;
    min-width: 0;
    margin-right: 2px;
}
.document {
    padding: 0 2px 4px 1px;
    background: #e1edff;
}
.doctabs {
    display: flex;
    height: 22px;
    padding-left: 2px;
}
.doctab {
    display: flex;
    align-items: center;
    gap: 10px;
    padding: 2px 4px 0 8px;
    border: 1px solid #8db2e3;
    border-bottom: none;
    background: linear-gradient(#fff, #eaf3ff);
}
.doctab button {
    color: #7d90ad;
}
.doctab svg {
    width: 10px;
    height: 10px;
}

/* report surface */
.designer {
    background: #9ebbe5;
    border: 1px solid #83a6d8;
    border-bottom: none;
}
.hruler {
    display: flex;
    align-items: center;
    height: 23px;
    padding-right: 1px;
}
.corner {
    display: flex;
    align-items: center;
    justify-content: center;
    width: 24px;
    height: 23px;
    border: 1px solid #4b7dc4;
    background: #abc8ee;
}
.corner svg {
    width: 8px;
    height: 8px;
}
.scale {
    display: flex;
    flex: 1;
    height: 12px;
    overflow: hidden;
    border: 1px solid #cfe0f6;
    background: #fff;
    font: 10px/10px "Liberation Sans", sans-serif;
    color: #3d6ea8;
}
.inch {
    flex: none;
    width: 96px;
    text-align: center;
    background:
        linear-gradient(#4c74a8, #4c74a8) 0 2px / 1px 6px no-repeat,
        radial-gradient(circle, #4c74a8 1px, transparent 1px) -6px 0 / 12px 10px #fff;
}
.inch span {
    display: inline-block;
    width: 12px;
    background: #fff;
}
.inch.first {
    width: 48px;
    text-align: left;
    background: radial-gradient(circle, #4c74a8 1px, transparent 1px) -6px 0 / 12px 10px #b2cdf0;
}
.inch.first span {
    width: 6px;
    background: #b2cdf0;
}
.inch.zero {
    background:
        linear-gradient(#4c74a8, #4c74a8) 0 2px / 1px 6px no-repeat,
        radial-gradient(circle, #4c74a8 1px, transparent 1px) -6px 0 / 12px 10px,
        linear-gradient(90deg, #b2cdf0 50%, #fff 50%);
}
.inch.last {
    flex: 1;
    padding-right: 1px;
    border-right: 9px solid #b2cdf0;
}
.surface {
    display: flex;
    background: #eceeec;
}
.bands {
    flex: 1;
    min-width: 0;
}
.band-head, .band-body {
    display: flex;
}
.vr {
    flex: none;
    width: 25px;
    padding: 0 7px 0 6px;
    background: #9ebbe5;
    border-right: 1px solid #5f88c4;
}
.band-head .vr {
    padding: 7px 9px 5px 8px;
}
.band-head .vr i {
    display: block;
    height: 9px;
    background: repeating-linear-gradient(#4f7fc4 0 1px, #b9d0f0 1px 2px);
}
.band-body .vr i, .hscroll-row .vr i {
    display: block;
    height: 100%;
    border: 1px solid #d8e6f8;
    background: radial-gradient(circle, #4c74a8 1px, transparent 1px) 0 5px / 11px 12px #fff;
}
.margin .vr span {
    display: block;
    border: 1px solid #cfe0f6;
    border-top: none;
    font: 9px/12px "Liberation Sans", sans-serif;
    text-align: center;
    color: #3d6ea8;
    background: #b2cdf0;
}
.caption {
    display: flex;
    align-items: center;
    gap: 4px;
    flex: 1;
    height: 21px;
    padding: 1px 0 0 5px;
    border-top: 1px solid #c4c4c4;
    border-bottom: 1px solid #c4c4c4;
    background: #f2f2f2;
    font: 10px/14px "Liberation Mono", monospace;
    color: #707070;
}
.caption .ico {
    width: 15px;
    height: 15px;
}
.caption .tri {
    width: 9px;
    height: 9px;
}
.selected .caption, .blue-top .caption {
    border-top: 2px solid #7d9fce;
    height: 22px;
}
.selected .caption {
    position: relative;
    background: #dce9fa;
}
.smarttag {
    position: absolute;
    left: 112px;
    top: -4px;
    width: 11px;
    height: 11px;
    border: 1px solid #000a4c;
    background: #fff;
}
.smarttag svg {
    width: 7px;
    height: 7px;
}
.paper {
    flex: 1;
    min-width: 0;
    padding: 0 13px 0 115px;
    background:
        repeating-linear-gradient(#8a8a8a 0 4px, transparent 4px 6px) 96px 0 / 1px 100% no-repeat,
        linear-gradient(90deg, #dcdcdc 1px, transparent 1px) 0 0 / 48px 100%,
        linear-gradient(#dcdcdc 1px, transparent 1px) 0 0 / 100% 48px,
        linear-gradient(90deg, #f0f0f0 1px, transparent 1px) 0 0 / 12px 100%,
        linear-gradient(#f0f0f0 1px, transparent 1px) 0 0 / 100% 12px #fff;
}
.margin {
    height: 11px;
}
.header .paper {
    padding-top: 2px;
}
.title-label {
    height: 61px;
    background: #eae3d7;
    font-size: 28px;
    line-height: 64px;
    text-align: center;
    color: #000;
}
.group .paper {
    padding-top: 7px;
}
.cat-label {
    position: relative;
    height: 32px;
    border: 1px solid #a5b9dd;
    border-bottom: none;
    background: #c9d6ee;
    font-size: 19px;
    font-weight: bold;
    line-height: 32px;
    text-align: center;
    color: #000;
}
.db {
    position: absolute;
    right: 1px;
    top: 1px;
    width: 10px;
    height: 12px;
}
.cells {
    display: grid;
    grid-template-columns: 203fr 285fr 99fr;
    height: 25px;
    border-left: 2px solid #b0bcd2;
}
.cells div {
    position: relative;
    padding: 0 8px;
    border-right: 3px solid #b0bcd0;
    font: 13px/28px "Liberation Serif", serif;
}
.cells div:last-child {
    border-right-width: 2px;
}
.cells .right {
    text-align: right;
}
.footer, .footer .cells {
    height: 10px;
    overflow: hidden;
}
.footer .cells {
    border-top: 1px solid #7e8794;
}
.vscroll {
    display: flex;
    flex-direction: column;
    align-items: center;
    width: 16px;
    padding: 6px 0;
    background: #eceeec;
    color: #4a5f94;
}
.vscroll .tri {
    width: 10px;
    height: 8px;
}
.up {
    transform: rotate(180deg);
}
.vscroll .thumb {
    display: flex;
    align-items: center;
    justify-content: center;
    width: 15px;
    height: 98px;
    margin: 53px 0 auto;
    border: 1px solid #4f6fa8;
    border-radius: 1px;
    background: linear-gradient(90deg, #e3edfa, #a9c1e2 60%, #d6e3f4);
}
.vscroll .thumb i {
    width: 7px;
    height: 8px;
    background: repeating-linear-gradient(#4a679e 0 1px, transparent 1px 2px);
}
.hscroll-row {
    display: flex;
    height: 16px;
    background: #e1edff;
}
.hscroll {
    display: flex;
    align-items: center;
    flex: 1;
    margin-right: 16px;
    padding: 0 4px 0 3px;
    background: #eceeec;
    color: #34487a;
}
.hscroll .tri {
    width: 9px;
    height: 9px;
}
.left {
    transform: rotate(90deg);
}
.rightward {
    transform: rotate(-90deg);
    margin-left: auto;
}
.hscroll .thumb {
    display: flex;
    align-items: center;
    justify-content: center;
    flex: 0 0 80%;
    height: 15px;
    margin-left: 26px;
    border: 1px solid #3f6fb4;
    border-radius: 1px;
    background: linear-gradient(#dbe9fb, #c0d9f7 45%, #9dc3f0 50%, #b4d2f6);
}
.hscroll .thumb i {
    width: 8px;
    height: 7px;
    background: repeating-linear-gradient(90deg, #4a679e 0 1px, transparent 1px 2px);
}
.splitter {
    display: flex;
    flex: none;
    justify-content: center;
    height: 4px;
    background: #f2f8ff;
}

/* tray and view tabs */
.tray {
    display: flex;
    align-items: center;
    gap: 34px;
    height: 50px;
    padding: 8px 22px 0;
    border: 1px solid #a4c4ec;
    background: #e1edff;
}
.tray div {
    display: flex;
    align-items: center;
    gap: 3px;
}
.viewbar {
    display: flex;
    align-items: center;
    height: 31px;
    padding: 0 6px 0 1px;
    border: 1px solid #86a9da;
    border-top: none;
    background: linear-gradient(#e0edff, #cfe2fe 40%, #aed0fd 45%, #c4ddff);
    color: #16206a;
}
.view {
    gap: 3px;
    height: 26px;
    padding: 0 3px 0 2px;
    font-family: "DejaVu Sans", sans-serif;
}
.viewbar .active {
    background: linear-gradient(#fecb8c, #ffb048);
    border: 1px solid #f9a94a;
}
.viewbar .sep {
    height: 20px;
    margin: 0 4px;
}
.status-text {
    flex: 1;
    padding-left: 3px;
}
.zoomlabel {
    padding: 5px;
    border-left: 1px solid #8db2e3;
}
.round svg {
    width: 17px;
    height: 17px;
}
input[type="range"] {
    appearance: none;
    width: 107px;
    height: 20px;
    background: linear-gradient(#6080ac, #6080ac) center / 100% 1px no-repeat;
}
input[type="range"]::-webkit-slider-thumb {
    appearance: none;
    width: 11px;
    height: 17px;
    background: linear-gradient(90deg, #8a7c48 1px, #fff4c4 1px 5px, #c9a640 5px 6px, #f8dc7c 6px 10px, #8a7c48 10px);
    clip-path: polygon(0 0, 100% 0, 100% 70%, 50% 100%, 0 70%);
}

/* docked panels */
.panel {
    display: flex;
    flex-direction: column;
    padding: 2px;
    border: 1px solid #6c93c8;
    background: #7aa0d0;
}
.panel-head {
    display: flex;
    flex: none;
    align-items: center;
    gap: 8px;
    height: 22px;
    padding: 0 4px 0 5px;
    border-radius: 3px 3px 0 0;
    background: #b7cde9;
    color: #15459a;
}
.panel-head h2 {
    flex: 1;
}
.panel-head button {
    width: 11px;
    height: 16px;
}
.panel-head svg {
    width: 10px;
    height: 10px;
}
.panel-tabs {
    display: flex;
    height: 23px;
    background: #b7cde9;
    border-top: 1px solid #6c93c8;
    color: #16206a;
}
.panel-tabs button {
    gap: 4px;
    margin-bottom: 2px;
    padding: 0 4px;
    border-right: 1px solid #86a9da;
}
.panel-tabs .on {
    padding: 0 5px;
    border: 1px solid #6c93c8;
    border-top: none;
    border-radius: 0 0 4px 4px;
    background: #e6f0ff;
    color: #111;
}
.groupsort {
    flex: 1;
    margin-top: 1px;
}
.gs-bar {
    display: flex;
    align-items: center;
    height: 23px;
    padding-left: 5px;
    background: linear-gradient(#e6f0ff, #d5e6fd 50%, #b9d5fb);
    font-family: "DejaVu Sans", sans-serif;
}
.gs-bar button {
    gap: 4px;
    margin-right: 8px;
    font-family: inherit;
}
.gs-bar .sep {
    margin: 0 5px 0 0;
}
.gs-bar button:disabled {
    color: #8f9aab;
}
.gs-grid {
    flex: 1;
    padding: 1px;
    border: 1px solid #6c93c8;
    background: #fff;
}
.gs-grid th {
    height: 20px;
    padding: 0 5px;
    border: 1px solid #6f9dd9;
    background: linear-gradient(#fff, #d6e6fb);
    font-weight: normal;
    text-align: left;
}
.gs-grid .c-field {
    width: 225px;
}
.gs-grid .c-col {
    width: 92px;
}
.gs-grid td {
    height: 19px;
    padding: 0;
    border-bottom: 1px solid #dfeafa;
}
.gs-grid .sel {
    padding-left: 4px;
    border-right: 1px solid #fff;
    background: #7b95df;
    color: #fff;
}
.gs-grid .chk {
    padding: 0;
}
.field {
    display: block;
    width: 100%;
    height: 18px;
    padding-left: 3px;
    border: none;
}
input[type="checkbox"] {
    appearance: none;
    display: block;
    width: 12px;
    height: 12px;
    margin: 0 auto;
    border: 1px solid #4f76ac;
    background: #f3f7fd;
}
input[type="checkbox"]:checked::before {
    content: "";
    display: block;
    width: 7px;
    height: 4px;
    margin: 2px 1px;
    border-left: 2px solid #2b5088;
    border-bottom: 2px solid #2b5088;
    transform: rotate(-45deg);
}

/* side column */
.side {
    display: flex;
    flex-direction: column;
    flex: none;
    width: 207px;
}
.explorer {
    height: 272px;
}
.tree {
    flex: 1;
    padding: 1px 1px 0 6px;
    background: #fff;
}
.tree ul {
    margin: 0;
    padding: 0 0 0 18px;
    list-style: none;
    background: repeating-linear-gradient(#555 0 1px, transparent 1px 3px) 23px 0 / 1px 98px no-repeat;
}
.node {
    display: flex;
    align-items: center;
    gap: 3px;
    height: 18px;
}
.node span {
    padding: 1px 2px;
}
.exp {
    flex: none;
    width: 11px;
    height: 11px;
    border: 1px solid #7f96b4;
    border-radius: 2px;
    background:
        linear-gradient(#35507c, #35507c) center / 5px 1px no-repeat,
        linear-gradient(#35507c, #35507c) center / 1px 5px no-repeat,
        linear-gradient(#fff, #cfdcec);
}
.minus {
    background: linear-gradient(#35507c, #35507c) center / 5px 1px no-repeat, linear-gradient(#fff, #cfdcec);
}
.leaf {
    padding-left: 14px;
    background: repeating-linear-gradient(90deg, #555 0 1px, transparent 1px 3px) 6px 9px / 8px 1px no-repeat;
}
.node .ico {
    width: 15px;
    height: 15px;
}
.picked span {
    flex: 1;
    background: #7b95df;
    color: #fff;
}
.props {
    flex: 1;
    margin-top: 1px;
}
.object {
    height: 22px;
    padding-left: 2px;
    padding-right: 12px;
    border: 1px solid #a9c4e8;
    font-weight: bold;
}
.prop-bar {
    display: flex;
    align-items: center;
    gap: 5px;
    height: 25px;
    padding-left: 2px;
    background: linear-gradient(#e6f0ff, #cfe2fd 60%, #b9d5fb);
    border-bottom: 1px solid #86a9da;
}
.prop-bar button {
    height: 22px;
}
.prop-bar .active {
    width: 22px;
    border: 1px solid #f3a140;
    background: linear-gradient(#fdc078, #ffaf48);
}
.prop-bar .active svg {
    width: 18px;
    height: 18px;
}
.az b {
    display: block;
    font: bold 9px/8px "DejaVu Sans", sans-serif;
    color: #1b6fc0;
}
.az b + b {
    color: #b5202a;
}
.az svg {
    width: 6px;
    height: 16px;
    margin-left: 2px;
}
.prop-area {
    display: flex;
    padding: 2px 1px 0 2px;
    background: #fff;
}
.prop-table {
    flex: 1;
    min-width: 0;
    border: 1px solid #6c93c8;
}
.c-edge {
    width: 14px;
}
.c-name {
    width: 76px;
}
.prop-area th {
    height: 19px;
    padding: 0 12px 0 4px;
    background: linear-gradient(#e8f2ff, #cfe2fb);
    border-bottom: 1px solid #6c93c8;
    text-align: left;
    font-family: "DejaVu Sans", sans-serif;
    font-weight: normal;
    color: #4275b4;
}
.prop-area th span {
    display: flex;
    align-items: center;
    justify-content: space-between;
}
.prop-area th svg {
    width: 8px;
    height: 9px;
}
.prop-area td {
    height: 20px;
    padding: 0 0 0 3px;
    border-bottom: 1px solid #d6e5f8;
    background: #fff;
    white-space: nowrap;
}
.prop-area .edge {
    padding: 0;
    background: linear-gradient(#e8f2ff, #c9defa);
}
.prop-area td.edge {
    border-right: 1px solid #6c93c8;
}
.prop-area .name {
    padding-left: 15px;
    border-right: 1px solid #d6e5f8;
    background: #f0f6ff;
}
.prop-area .font {
    padding-left: 1px;
}
.font .exp {
    display: inline-block;
    margin-right: 3px;
    vertical-align: -2px;
}
.swatch {
    display: inline-block;
    width: 22px;
    height: 11px;
    margin: 0 4px 0 2px;
    border: 1px solid #000;
    vertical-align: -2px;
}
.black {
    background: #000;
}
.small {
    width: 17px;
    padding: 4px 0;
}
.small .thumb {
    height: 24px;
    margin-top: 5px;
}
.desc {
    flex: 1;
    padding: 8px 4px 0;
    border: 1px solid #86a9da;
    background: #e1edff;
    color: #f5f9ff;
    text-align: right;
    text-shadow: 0 0 2px #b9c8de;
}
.mark-cn {
    font: bold 20px/29px "Noto Sans CJK SC", sans-serif;
}
.mark-url {
    font: bold 11px/13px "DejaVu Sans", sans-serif;
}

.statusbar {
    display: flex;
    align-items: flex-end;
    justify-content: flex-end;
    height: 29px;
    padding: 4px;
    border-top: 1px solid #8db2e3;
    background: linear-gradient(#e1eeff 0, #cbe1ff 30%, #afd1fe 35%, #bedaff);
}
.statusbar svg {
    width: 12px;
    height: 12px;
}
```
